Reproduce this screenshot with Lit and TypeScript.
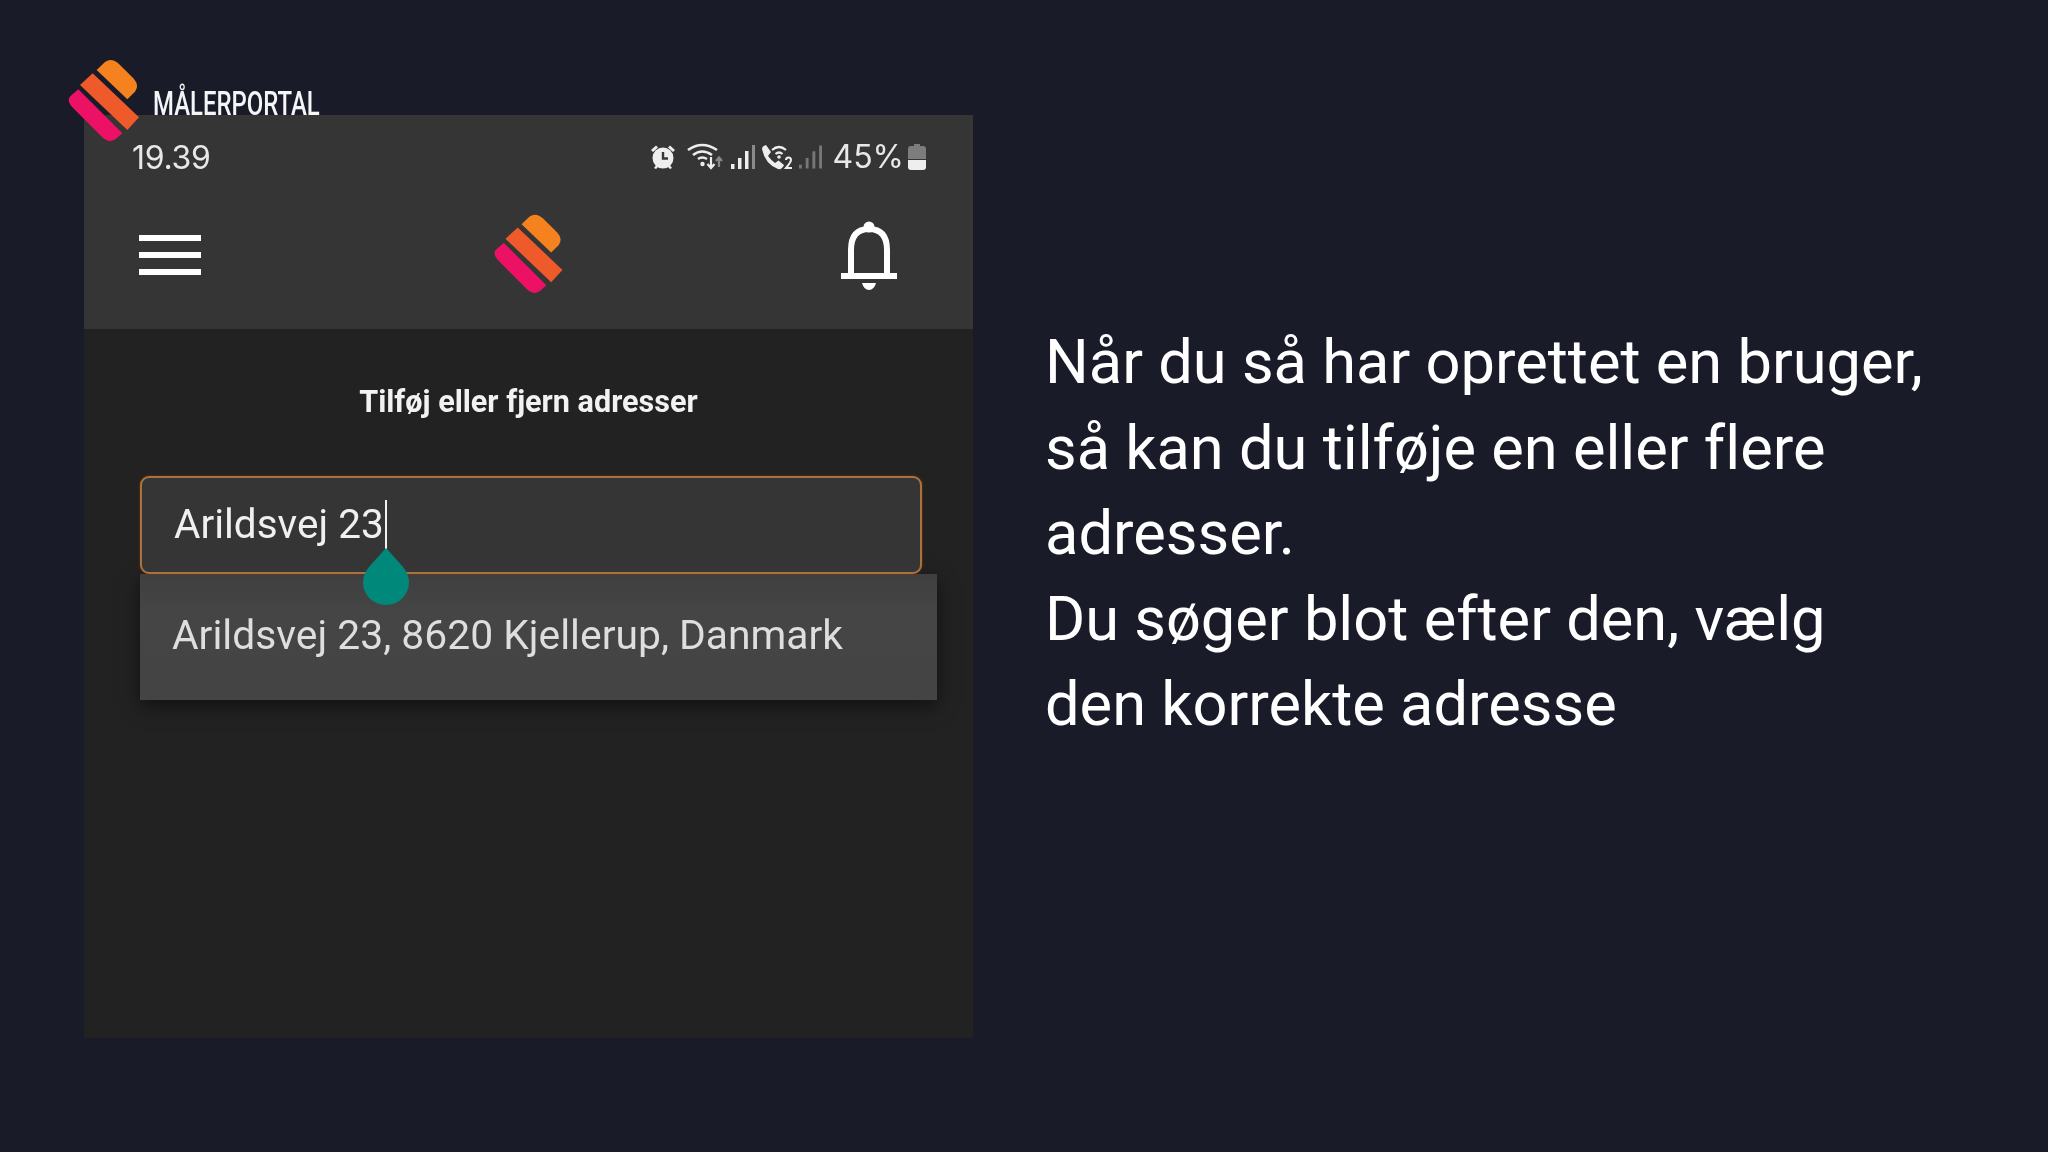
import { LitElement, html, css, svg } from "lit";
import { customElement } from "lit/decorators.js";

const logo = svg`
  <path fill="#f5821f" d="M140 90 L165 66 Q185 52 207 72 L250 115 Q270 137 255 155 L232 178 Z"/>
  <path fill="#ef5a2a" d="M128 100 L267 232 L232 270 L90 135 Z"/>
  <path fill="#ec1164" d="M85 148 L217 280 L200 295 Q180 312 160 295 L70 205 Q45 180 65 165 Z"/>
`;

@customElement("app-root")
export class AppRoot extends LitElement {
  static styles = css`
    :host { display: block; }
    .page {
      position: relative; width: 2048px; height: 1152px; box-sizing: border-box;
      background: #191b29; padding: 115px 0 0 84px;
      display: flex; align-items: flex-start; gap: 72px;
      font-family: Roboto, "Liberation Sans", sans-serif; overflow: hidden;
    }
    .brand { position: absolute; left: 50px; top: 40px; display: flex; align-items: flex-start; z-index: 3; }
    .brand svg { width: 100px; height: 110px; display: block; }
    .brand span {
      color: #f4f5f7; font: 500 33px/1 Roboto, sans-serif;
      margin: 47px 0 0 3px; display: block; white-space: nowrap;
      transform: scaleX(.725); transform-origin: left center;
    }
    .phone { width: 889px; height: 923px; background: #222222; flex: none; display: flex; flex-direction: column; filter: blur(.5px); }
    .head { background: #353535; height: 214px; flex: none; }
    .status { height: 84px; box-sizing: border-box; padding: 0 47px 0 48px; display: flex; align-items: center; justify-content: space-between; color: #e8e8e8; }
    .time { font: 32px/1 Inter, sans-serif; letter-spacing: -.3px; margin-top: 1px; }
    .icons { display: flex; align-items: center; }
    .icons svg { display: block; }
    .pct { font: 32px/1 Inter, sans-serif; margin: 0 4px 0 10px; }
    .nav { height: 130px; display: grid; grid-template-columns: 1fr auto 1fr; align-items: center; }
    .burger { margin-left: 55px; width: 62px; display: flex; flex-direction: column; gap: 11px; margin-top: -18px; }
    .burger i { display: block; height: 6px; background: #fff; }
    .navlogo { width: 74px; height: 86px; display: block; margin: -20px 0 0 -2px; }
    .bell { justify-self: end; margin-right: 76px; margin-top: -17px; display: block; }
    .title { color: #f2f2f2; font-weight: 700; font-size: 30.6px; line-height: 36px; text-align: center; margin-top: 55px; }
    .field {
      position: relative; box-sizing: border-box; margin: 56px 0 0 56px; width: 782px; height: 98px;
      background: #353535; border: 2px solid #a8733f; border-radius: 9px; z-index: 1;
      box-shadow: 0 0 3px #6b3510;
      display: flex; align-items: center; padding: 0 0 2px 32px; color: #f0f0f0; font-size: 40.5px;
    }
    .caret { width: 2px; height: 50px; background: #f0f0f0; margin: 2px 0 0 1px; }
    .drop { position: absolute; left: 221px; top: 70px; width: 46px; height: 57px; display: block; z-index: 2; }
    .list {
      margin-left: 56px; width: 797px; height: 126px; box-sizing: border-box; padding: 0 0 4px 32px;
      background: linear-gradient(#3f3f41, #454545 30%, #444444); box-shadow: 0 6px 18px rgba(0,0,0,.5);
      display: flex; align-items: center; color: #dedede; font-size: 40.8px;
    }
    .copy { color: #fff; font-size: 61.4px; line-height: 85.5px; padding-top: 205px; white-space: nowrap; font-variant-ligatures: none; }
  `;

  render() {
    return html`<div class="page">
      <div class="brand">
        <svg viewBox="0 0 300 330">${logo}</svg>
        <span>MÅLERPORTAL</span>
      </div>
      <div class="phone">
        <div class="head">
          <div class="status">
            <span class="time">19.39</span>
            <div class="icons">
              <svg width="26" height="26" viewBox="0 0 26 26" fill="#eee" style="margin-right:11px">
                <circle cx="13" cy="14" r="10.5"/>
                <path d="M1 6 L6 1.5 L8 3.5 L3 8Z M25 6 L20 1.5 L18 3.500 L23 8Z M4 24l3-4 2 2-3 3z M22 24l-3-4-2 2 3 3z"/>
                <path d="M13 8v6.500h5" fill="none" stroke="#363636" stroke-width="2.400"/>
              </svg>
              <svg width="38" height="28" viewBox="0 0 38 28" fill="none" style="margin-right:6px">
                <path d="M1 7 Q15 -3 30 7" stroke="#eee" stroke-width="2.600"/>
                <path d="M6 12 Q15 5 25 12" stroke="#eee" stroke-width="2.600"/>
                <path d="M11 16 Q15 13 20 16" stroke="#eee" stroke-width="2.400"/>
                <circle cx="15.500" cy="21" r="2.200" fill="#eee"/>
                <path d="M24 14v10M20.500 21l3.500 4 3.500-4" stroke="#eee" stroke-width="2.200"/>
                <path d="M32 24v-9M29 18l3-3.500 3 3.500" stroke="#888" stroke-width="2.200"/>
              </svg>
              <svg width="24" height="24" viewBox="0 0 24 24" fill="#eee" style="margin-right:6px">
                <rect x="0" y="19" width="3.500" height="5"/><rect x="7" y="13" width="3.500" height="11"/><rect x="14" y="6" width="3.500" height="18"/><rect x="21" y="0" width="3" height="24" fill="#8a8a8a"/>
              </svg>
              <svg width="32" height="28" viewBox="0 0 32 28" fill="none" style="margin-right:6px">
                <path fill="#eee" d="M1 6 Q1 3 5 2 L10 9 L7 13 Q10 17 14 20 L17.500 17.500 L23 22 Q21 27 17 26 Q4 21 1 6Z"/>
                <path d="M11 7 Q18 1 25 7M14.500 11 Q18 8 21.500 11" stroke="#eee" stroke-width="2.200"/>
                <circle cx="18" cy="14" r="1.800" fill="#eee"/>
                <path d="M25 17 Q25 14.500 27.500 14.500 Q30 14.500 30 17 Q30 19 25 25H31" stroke="#eee" stroke-width="2"/>
              </svg>
              <svg width="23" height="24" viewBox="0 0 24 24" fill="#777">
                <rect x="0" y="20" width="3" height="4"/><rect x="7" y="13" width="3" height="11"/><rect x="14" y="6" width="3" height="18"/><rect x="21" y="0" width="3" height="24"/>
              </svg>
              <span class="pct">45%</span>
              <svg width="18" height="26" viewBox="0 0 18 26">
                <path fill="#7d7d7d" d="M6 0h6v2h3q3 0 3 3v10H0V5q0-3 3-3h3z"/>
                <path fill="#eee" d="M0 16h18v7q0 3-3 3H3q-3 0-3-3z"/>
              </svg>
            </div>
          </div>
          <div class="nav">
            <div class="burger"><i></i><i></i><i></i></div>
            <svg class="navlogo" viewBox="45 50 230 265">${logo}</svg>
            <svg class="bell" width="56" height="70" viewBox="0 0 56 70" fill="none">
              <circle cx="28" cy="6" r="5.500" fill="#fff"/>
              <path d="M10 54V29 Q10 8 28 8 Q46 8 46 29V54" stroke="#fff" stroke-width="6"/>
              <rect x="0" y="52" width="56" height="6" fill="#fff"/>
              <path d="M21 62h14 Q33 69 28 69 Q23 69 21 62Z" fill="#fff"/>
            </svg>
          </div>
        </div>
        <div class="title">Tilføj eller fjern adresser</div>
        <div class="field">
          Arildsvej 23<span class="caret"></span>
          <svg class="drop" viewBox="0 0 46 58" preserveAspectRatio="none"><path fill="#00897b" d="M23 0 L39 18 Q46 26 46 35 A23 23 0 0 1 0 35 Q0 26 7 18Z"/></svg>
        </div>
        <div class="list">Arildsvej 23, 8620 Kjellerup, Danmark</div>
      </div>
      <div class="copy">Når du så har oprettet en bruger,<br>så kan du tilføje en eller flere<br>adresser.<br>Du søger blot efter den, vælg<br>den korrekte adresse</div>
    </div>`;
  }
}
